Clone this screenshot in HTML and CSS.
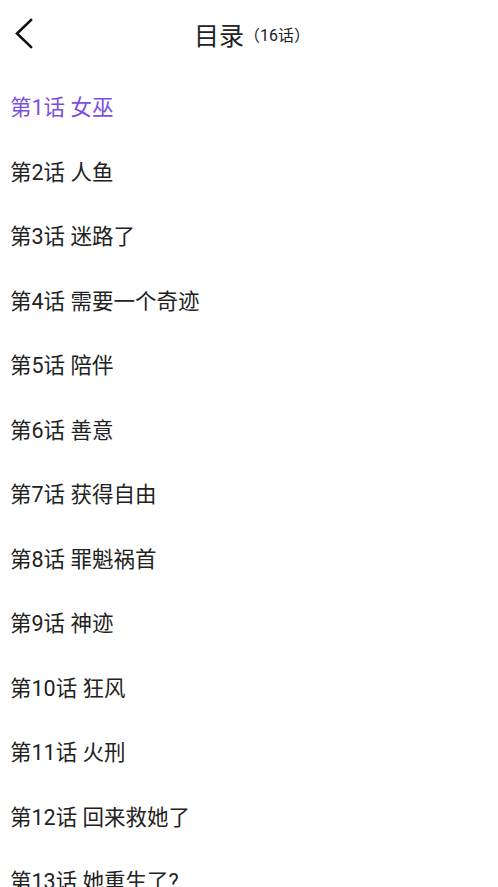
FILE: index.html
```html
<!DOCTYPE html>
<html lang="zh">
<head>
<meta charset="utf-8">
<link rel="stylesheet" href="styles.css">
</head>
<body>
<header class="bar">
  <span class="back">
    <svg width="20" height="32" viewBox="0 0 20 32"><path d="M17 3 L3 16.5 L17 30" fill="none" stroke="#111" stroke-width="2.6" stroke-linecap="square"/></svg>
  </span>
  <h1 class="title">目录<span class="count">（16话）</span></h1>
</header>
<ul class="list">
  <li class="item active">第1话 女巫</li>
  <li class="item">第2话 人鱼</li>
  <li class="item">第3话 迷路了</li>
  <li class="item">第4话 需要一个奇迹</li>
  <li class="item">第5话 陪伴</li>
  <li class="item">第6话 善意</li>
  <li class="item">第7话 获得自由</li>
  <li class="item">第8话 罪魁祸首</li>
  <li class="item">第9话 神迹</li>
  <li class="item">第10话 狂风</li>
  <li class="item">第11话 火刑</li>
  <li class="item">第12话 回来救她了</li>
  <li class="item">第13话 她重生了?</li>
  <li class="item">第14话</li>
</ul>
</body>
</html>
```
FILE: styles.css
```css
html, body {
  margin: 0;
  padding: 0;
  background: #fff;
  overflow: hidden;
  height: 887px;
}
body {
  font-family: Roboto, "Noto Sans CJK SC", sans-serif;
  color: #222;
}
.bar {
  position: relative;
  height: 70px;
  display: flex;
  align-items: center;
  justify-content: center;
}
.back {
  position: absolute;
  left: 14px;
  top: 17px;
  width: 20px;
  height: 32px;
}
.back svg { display: block; }
.title {
  margin: 0;
  font-size: 25px;
  font-weight: 400;
  color: #222;
  display: flex;
  align-items: center;
  padding: 0 0 3px 6px;
}
.count {
  font-size: 16px;
}
.list {
  list-style: none;
  margin: 0;
  padding: 6px 0 0 0;
}
.item {
  height: 64.5px;
  line-height: 64.5px;
  padding-left: 10px;
  font-size: 21.5px;
  color: #222;
  white-space: nowrap;
}
.item.active {
  color: #7b50e0;
}
```
